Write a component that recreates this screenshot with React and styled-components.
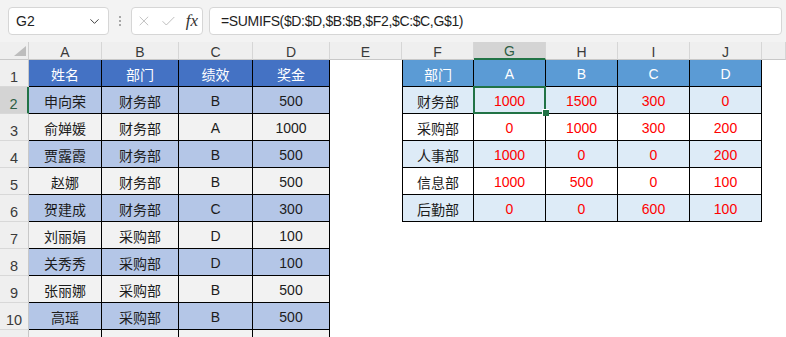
import React from "react";
import styled, { createGlobalStyle, css } from "styled-components";
import { ChevronDown, X, Check } from "lucide-react";

const GlobalStyle = createGlobalStyle`
  html, body {
    margin: 0;
    padding: 0;
    background: #fff;
  }
  body {
    font-family: "Liberation Sans", "Noto Sans CJK SC", sans-serif;
    overflow: hidden;
  }
`;

const Frame = styled.div`
  width: 786px;
  height: 337px;
  overflow: hidden;
  background: #fff;
`;

const FormulaBar = styled.div`
  display: flex;
  align-items: flex-start;
  height: 42px;
  padding: 7px 4px 0 8px;
  box-sizing: border-box;
  background: #f3f3f3;
`;

const NameBox = styled.div`
  width: 101px;
  height: 28px;
  box-sizing: border-box;
  display: flex;
  align-items: center;
  justify-content: space-between;
  padding: 0 6px 0 7px;
  background: #fff;
  border: 1px solid #d6d6d6;
  border-radius: 4px;
  font-size: 14px;
  color: #222;
`;

const Grip = styled.div`
  width: 22px;
  height: 28px;
  display: flex;
  flex-direction: column;
  align-items: center;
  justify-content: center;
  gap: 2px;

  span {
    width: 2px;
    height: 2px;
    border-radius: 1px;
    background: #8e8e8e;
  }
`;

const FxBox = styled.div`
  width: 72px;
  height: 28px;
  box-sizing: border-box;
  display: flex;
  align-items: center;
  padding: 0 4px 0 4px;
  gap: 8px;
  background: #fff;
  border: 1px solid #d6d6d6;
  border-radius: 4px;
  color: #b8b8b8;
`;

const Fx = styled.span`
  font-family: "Liberation Serif", serif;
  font-style: italic;
  font-size: 17px;
  color: #333;
  margin-left: 1px;
`;

const FormulaInput = styled.div`
  flex: 1;
  height: 28px;
  margin-left: 6px;
  box-sizing: border-box;
  display: flex;
  align-items: center;
  padding-left: 11px;
  background: #fff;
  border: 1px solid #d6d6d6;
  border-radius: 4px;
  font-size: 14px;
  letter-spacing: -0.35px;
  color: #1e1e1e;
`;

const Sheet = styled.div`
  display: grid;
  grid-template-columns: 29px 73px 77px 74px 77px repeat(6, 72px) 1fr;
  grid-template-rows: 18px;
  grid-auto-rows: 27px;
`;

const headBase = css`
  box-sizing: border-box;
  background: #efefef;
  color: #3a3a3a;
  display: flex;
  justify-content: center;
`;

const Corner = styled.div`
  ${headBase};
  align-items: flex-end;
  justify-content: flex-end;
  padding: 0 2px 3px 0;
  border-right: 1px solid #cfcfcf;
  border-bottom: 1px solid #c8c8c8;
`;

const ColHead = styled.div`
  ${headBase};
  align-items: center;
  padding-top: 2px;
  font-size: 14px;
  border-right: 1px solid #d6d6d6;
  border-bottom: 1px solid #c8c8c8;

  ${(p) =>
    p.$active &&
    css`
      background: #d4d4d4;
      color: #2e5e44;
      border-bottom: 2px solid #217346;
    `}
`;

const RowHead = styled.div`
  ${headBase};
  align-items: flex-end;
  padding-bottom: 1px;
  font-size: 14.5px;
  border-right: 1px solid #c8c8c8;
  border-bottom: 1px solid #d8d8d8;

  ${(p) =>
    p.$active &&
    css`
      background: #d4d4d4;
      color: #2e5e44;
      border-right: 2px solid #217346;
    `}
`;

const tones = {
  lhead: { bg: "#4472c4", fg: "#fff" },
  lband: { bg: "#b4c6e7", fg: "#1c1c1c" },
  lplain: { bg: "#f2f2f2", fg: "#1c1c1c" },
  rhead: { bg: "#5b9bd5", fg: "#fff" },
  rband: { bg: "#ddebf7", fg: "#1c1c1c" },
  rplain: { bg: "#fff", fg: "#1c1c1c" },
};

const Cell = styled.div`
  position: relative;
  box-sizing: border-box;
  display: flex;
  align-items: center;
  justify-content: center;
  padding-top: 2px;
  font-size: 14px;
  background: ${(p) => (p.$tone ? tones[p.$tone].bg : "#fff")};
  color: ${(p) => (p.$red ? "#ff0000" : p.$tone ? tones[p.$tone].fg : "#1c1c1c")};

  ${(p) =>
    p.$tone &&
    css`
      border-right: 1px solid #000;
      border-bottom: 1px solid #000;
    `}
  ${(p) =>
    p.$edge &&
    css`
      border-left: 1px solid #000;
    `}
`;

const Selection = styled.div`
  position: absolute;
  top: -1px;
  left: -1px;
  right: -1px;
  bottom: -1px;
  border: 2px solid #217346;
  z-index: 2;
  pointer-events: none;
`;

const Handle = styled.div`
  position: absolute;
  right: -4px;
  bottom: -3px;
  width: 6px;
  height: 6px;
  background: #217346;
  border-left: 1px solid #fff;
  border-top: 1px solid #fff;
  z-index: 3;
`;

const columns = ["A", "B", "C", "D", "E", "F", "G", "H", "I", "J", ""];

const people = [
  ["申向荣", "财务部", "B", "500"],
  ["俞婵媛", "财务部", "A", "1000"],
  ["贾露霞", "财务部", "B", "500"],
  ["赵娜", "财务部", "B", "500"],
  ["贺建成", "财务部", "C", "300"],
  ["刘丽娟", "采购部", "D", "100"],
  ["关秀秀", "采购部", "D", "100"],
  ["张丽娜", "采购部", "B", "500"],
  ["高瑶", "采购部", "B", "500"],
];

const summary = [
  ["财务部", 1000, 1500, 300, 0],
  ["采购部", 0, 1000, 300, 200],
  ["人事部", 1000, 0, 0, 200],
  ["信息部", 1000, 500, 0, 100],
  ["后勤部", 0, 0, 600, 100],
];

function buildRow(r) {
  const cells = [];

  // left table A-D
  let left;
  let leftTone;
  if (r === 1) {
    left = ["姓名", "部门", "绩效", "奖金"];
    leftTone = "lhead";
  } else if (r <= 10) {
    left = people[r - 2];
    leftTone = r % 2 === 0 ? "lband" : "lplain";
  } else {
    left = ["", "", "", ""];
    leftTone = "lplain";
  }
  left.forEach((v, i) => cells.push({ v, tone: leftTone, key: "L" + i }));

  cells.push({ v: "", key: "E" });

  // right table F-J
  if (r === 1) {
    ["部门", "A", "B", "C", "D"].forEach((v, i) =>
      cells.push({ v, tone: "rhead", edge: i === 0, key: "R" + i })
    );
  } else if (r <= 6) {
    const tone = r % 2 === 0 ? "rband" : "rplain";
    summary[r - 2].forEach((v, i) =>
      cells.push({
        v,
        tone,
        edge: i === 0,
        red: i > 0,
        selected: r === 2 && i === 1,
        key: "R" + i,
      })
    );
  } else {
    for (let i = 0; i < 5; i++) cells.push({ v: "", key: "R" + i });
  }

  cells.push({ v: "", key: "K" });
  return cells;
}

export default function App() {
  const rows = Array.from({ length: 11 }, (_, i) => i + 1);

  return (
    <Frame>
      <GlobalStyle />
      <FormulaBar>
        <NameBox>
          G2
          <ChevronDown size={15} strokeWidth={1.5} color="#333" />
        </NameBox>
        <Grip>
          <span />
          <span />
          <span />
        </Grip>
        <FxBox>
          <X size={16} strokeWidth={1.3} />
          <Check size={17} strokeWidth={1.3} />
          <Fx>fx</Fx>
        </FxBox>
        <FormulaInput>=SUMIFS($D:$D,$B:$B,$F2,$C:$C,G$1)</FormulaInput>
      </FormulaBar>

      <Sheet>
        <Corner>
          <svg width="12" height="10" viewBox="0 0 12 10">
            <polygon points="12,0 12,10 0,10" fill="#bdbdbd" />
          </svg>
        </Corner>
        {columns.map((c, i) => (
          <ColHead key={"h" + i} $active={c === "G"}>
            {c}
          </ColHead>
        ))}

        {rows.map((r) => (
          <React.Fragment key={r}>
            {/* row 11 is only a sliver at the bottom edge, its number sits below the fold */}
            <RowHead $active={r === 2}>{r < 11 ? r : ""}</RowHead>
            {buildRow(r).map((cell) => (
              <Cell
                key={r + cell.key}
                $tone={cell.tone}
                $edge={cell.edge}
                $red={cell.red}
              >
                {cell.v}
                {cell.selected && (
                  <>
                    <Selection />
                    <Handle />
                  </>
                )}
              </Cell>
            ))}
          </React.Fragment>
        ))}
      </Sheet>
    </Frame>
  );
}
